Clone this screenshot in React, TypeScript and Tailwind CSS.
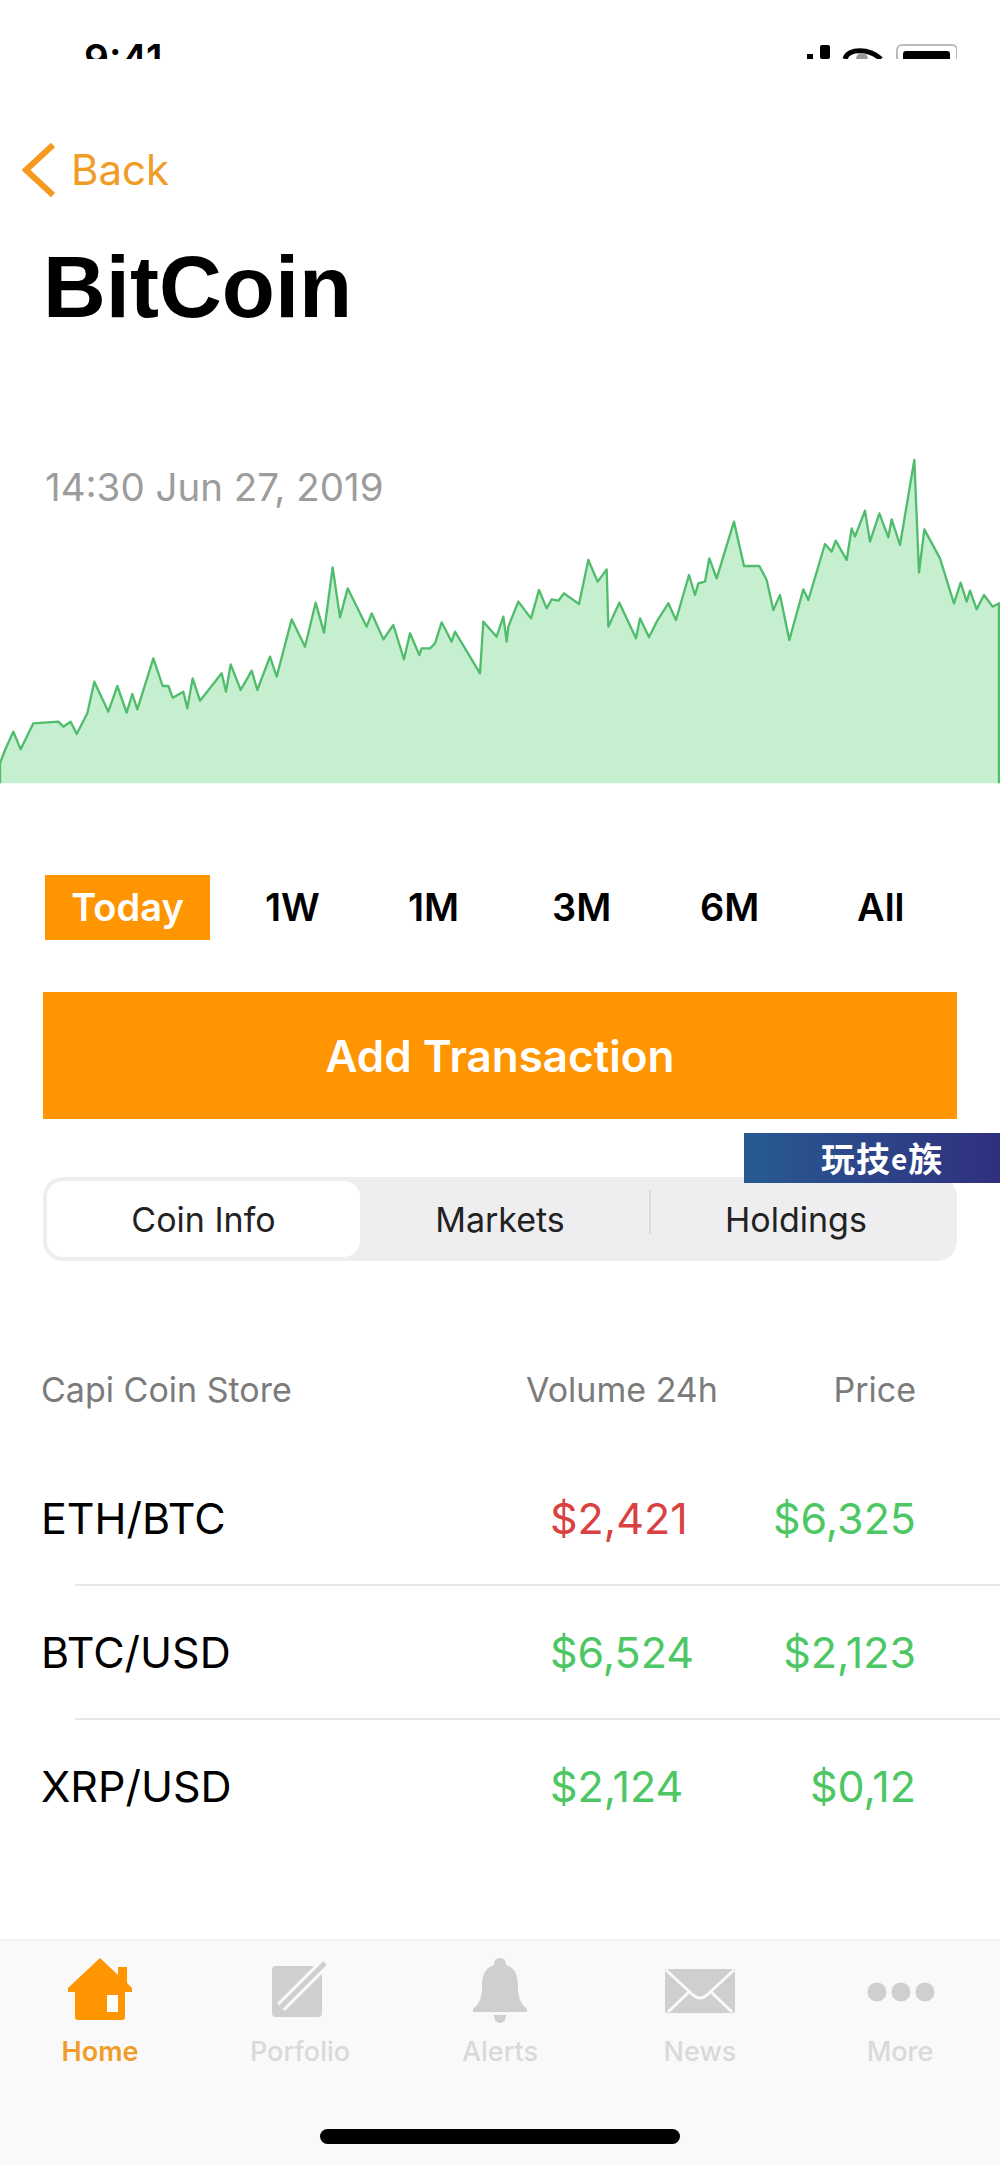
const FONT = "font-['Inter','Liberation_Sans',sans-serif]";

// chart trace, traced off the reference at 3x (x 0-3000, y 0-1110 over a 1000x370 box)
const TRACE = [
  [0, 1000], [15, 960], [40, 905], [62, 958], [100, 880], [175, 875], [190, 890], [212, 875], [230, 912], [262, 850],
  [283, 755], [325, 845], [352, 768], [380, 848], [397, 792], [412, 838], [460, 685], [488, 768], [505, 768], [518, 803],
  [550, 785], [562, 835], [578, 745], [600, 812], [665, 730], [678, 785], [692, 703], [722, 780], [755, 722], [772, 780],
  [810, 680], [830, 740], [875, 568], [915, 650], [947, 518], [972, 608], [998, 412], [1020, 562], [1043, 475], [1100, 590],
  [1115, 550], [1150, 628], [1180, 585], [1212, 688], [1230, 610], [1258, 675], [1265, 655], [1290, 655], [1305, 640], [1325, 577],
  [1355, 635], [1365, 605], [1440, 730], [1450, 575], [1490, 620], [1510, 560], [1520, 635], [1525, 590], [1555, 515], [1593, 565],
  [1617, 480], [1640, 535], [1655, 508], [1675, 512], [1692, 490], [1737, 522], [1765, 390], [1793, 455], [1820, 418], [1825, 590],
  [1858, 518], [1908, 625], [1920, 565], [1947, 622], [1970, 575], [2005, 520], [2028, 570], [2067, 435], [2085, 495], [2095, 460],
  [2115, 455], [2128, 385], [2150, 445], [2202, 275], [2232, 408], [2278, 408], [2300, 450], [2320, 540], [2340, 495], [2368, 630],
  [2410, 478], [2425, 510], [2475, 342], [2495, 365], [2507, 332], [2540, 390], [2555, 295], [2565, 320], [2595, 242], [2610, 335],
  [2638, 250], [2665, 322], [2675, 268], [2700, 345], [2743, 90], [2757, 428], [2773, 298], [2820, 385], [2840, 450], [2862, 520],
  [2882, 458], [2900, 515], [2910, 482], [2930, 538], [2952, 495], [2978, 530], [2997, 520],
];

const linePath = 'M0 1060 L' + TRACE.map(([x, y]) => `${x} ${y}`).join(' L') + ' L2997 1060';

const RANGES = [
  { label: '1W', width: 'w-[143px]' },
  { label: '1M', width: 'w-[144px]' },
  { label: '3M', width: 'w-[148px]' },
  { label: '6M', width: 'w-[157px]' },
  { label: 'All', width: 'w-auto' },
];

const ROWS = [
  { pair: 'ETH/BTC', volume: '$2,421', price: '$6,325', down: true },
  { pair: 'BTC/USD', volume: '$6,524', price: '$2,123', down: false },
  { pair: 'XRP/USD', volume: '$2,124', price: '$0,12', down: false },
];

function StatusIcons() {
  return (
    <svg width="150" height="15" viewBox="0 0 150 15" className="block">
      <rect x="0" y="10" width="6" height="5" fill="#000" />
      <rect x="13" y="1" width="10" height="14" rx="2" fill="#000" />
      <path d="M38 15 C41 4 62 4 74 15" fill="none" stroke="#000" strokeWidth="5" />
      <circle cx="55" cy="15" r="6" fill="#999" />
      <rect x="90" y="1" width="60" height="20" rx="5" fill="none" stroke="#bbb" strokeWidth="2" />
      <rect x="96" y="7" width="47" height="12" rx="3" fill="#000" />
    </svg>
  );
}

function HomeIcon() {
  return (
    <svg width="80" height="70" viewBox="0 0 80 70">
      <path d="M40 3 L58 20 V12 H67 V28 L72 33 V37 H65 V62 Q65 65 62 65 H18 Q15 65 15 62 V37 H8 V33 Z" fill="#ff9500" />
      <rect x="47" y="40" width="11" height="17" fill="#fff" />
    </svg>
  );
}

function PencilIcon() {
  return (
    <svg width="80" height="70" viewBox="0 0 80 70">
      <rect x="12" y="11" width="50" height="51" rx="4" fill="#cfcfcf" />
      <path d="M65 8 L21 52" stroke="#f9f9f9" strokeWidth="11" />
      <path d="M65 8 L26 47 L21 52" stroke="#cfcfcf" strokeWidth="5" />
    </svg>
  );
}

function BellIcon() {
  return (
    <svg width="80" height="70" viewBox="0 0 80 70">
      <path
        d="M40 3 C44 3 46 6 46 10 C56 13 58 22 58 32 C58 42 60 48 67 54 V57 H13 V54 C20 48 22 42 22 32 C22 22 24 13 34 10 C34 6 36 3 40 3 Z"
        fill="#cfcfcf"
      />
      <path d="M34 60 H46 C46 65 43 68 40 68 C37 68 34 65 34 60 Z" fill="#cfcfcf" />
    </svg>
  );
}

function MailIcon() {
  return (
    <svg width="80" height="70" viewBox="0 0 80 70">
      <rect x="5" y="14" width="70" height="44" rx="2" fill="#cfcfcf" />
      <path
        d="M6 15 L33 40 Q40 46 47 40 L74 15 M8 57 L30 36 M72 57 L50 36"
        fill="none"
        stroke="#f9f9f9"
        strokeWidth="3"
      />
    </svg>
  );
}

function DotsIcon() {
  return (
    <svg width="80" height="70" viewBox="0 0 80 70">
      <circle cx="17" cy="37" r="9.5" fill="#cfcfcf" />
      <circle cx="41" cy="37" r="9.5" fill="#cfcfcf" />
      <circle cx="65" cy="37" r="9.5" fill="#cfcfcf" />
    </svg>
  );
}

const TABS = [
  { label: 'Home', icon: <HomeIcon />, active: true },
  { label: 'Porfolio', icon: <PencilIcon />, active: false },
  { label: 'Alerts', icon: <BellIcon />, active: false },
  { label: 'News', icon: <MailIcon />, active: false },
  { label: 'More', icon: <DotsIcon />, active: false },
];

export default function App() {
  return (
    <div className={`relative w-[1000px] h-[2165px] overflow-hidden flex flex-col bg-white text-black ${FONT}`}>
      {/* Status bar, cut off in the source */}
      <div className="h-[59px] overflow-hidden flex justify-between pt-[44px] pl-[84px] pr-[43px]">
        <span className="text-[39px] leading-[29px] font-semibold">9:41</span>
        <StatusIcons />
      </div>

      {/* Back */}
      <div className="mt-[84px] ml-[22px] flex items-center gap-[14px] h-[54px] text-[#ef9d27]">
        <svg width="35" height="56" viewBox="0 0 35 56" fill="none">
          <path d="M31 3 L4 28 L31 53" stroke="#f7991c" strokeWidth="6" />
        </svg>
        <span className="text-[42px] leading-none">Back</span>
      </div>

      {/* Title */}
      <h1 className="mt-[45px] ml-[43px] text-[87px] leading-[90px] font-bold font-['Liberation_Sans',sans-serif]">
        BitCoin
      </h1>

      {/* Chart */}
      <div className="relative mt-[98px]">
        <svg width="1000" height="370" viewBox="0 0 3000 1110" className="block">
          <path d={linePath + ' Z'} fill="#c6efd0" />
          <path d={linePath} fill="none" stroke="#50bd6c" strokeWidth="7" strokeLinejoin="round" />
        </svg>
        <span className="absolute left-[45px] top-[37px] text-[38.5px] leading-[40px] text-[#9c9c9c]">
          14:30 Jun 27, 2019
        </span>
      </div>

      {/* Range picker */}
      <div className="mt-[75px] ml-[45px] flex items-center">
        <div className="w-[165px] h-[65px] flex items-center justify-center bg-[#ff9500] text-white text-[38px] font-semibold">
          Today
        </div>
        <div className="ml-[55px] flex text-[38px] font-semibold">
          {RANGES.map((r) => (
            <span key={r.label} className={r.width}>
              {r.label}
            </span>
          ))}
        </div>
      </div>

      {/* Add transaction */}
      <div className="mt-[52px] mx-[43px] h-[127px] flex items-center justify-center bg-[#ff9500] text-white text-[44px] font-semibold">
        Add Transaction
      </div>

      {/* Segmented control */}
      <div className="mt-[58px] ml-[43px] w-[914px] h-[84px] rounded-[20px] bg-[#eeeef0] p-[4px] flex items-center text-[34px] text-[#222]">
        <div className="w-[313px] h-full rounded-[16px] bg-white flex items-center justify-center">Coin Info</div>
        <div className="w-[289px] pr-[9px] text-center">Markets</div>
        <div className="relative flex-1 pr-[10px] text-center">
          <div className="absolute left-0 top-[-4px] w-[2px] h-[44px] bg-[#dcdcde]" />
          Holdings
        </div>
      </div>

      {/* Markets table */}
      <div className="mt-[107px]">
        <div className="h-[42px] pl-[41px] pr-[84px] flex items-center text-[34px] text-[#7b7b7b]">
          <span className="w-[485px]">Capi Coin Store</span>
          <span>Volume 24h</span>
          <span className="ml-auto">Price</span>
        </div>
        <div className="mt-[42px]">
          {ROWS.map((row, i) => (
            <div key={row.pair}>
              <div className="h-[132px] pl-[41px] pr-[84px] flex items-center text-[43px]">
                <span className="w-[509px]">{row.pair}</span>
                <span className={row.down ? 'text-[#d9403f]' : 'text-[#4cc764]'}>{row.volume}</span>
                <span className="ml-auto text-[#4cc764]">{row.price}</span>
              </div>
              {i < ROWS.length - 1 && <div className="ml-[75px] h-[2px] bg-[#e6e6e6]" />}
            </div>
          ))}
        </div>
      </div>

      {/* Tab bar */}
      <div className="mt-auto h-[226px] bg-[#f9f9f9] border-t-2 border-[#f1f1f1] flex flex-col items-center">
        <div className="w-full flex pt-[14px]">
          {TABS.map((tab) => (
            <div key={tab.label} className="w-[200px] flex flex-col items-center">
              {tab.icon}
              <span
                className={`mt-[12px] text-[27px] leading-[30px] ${
                  tab.active ? 'text-[#ef9d27] font-semibold' : 'text-[#d9d9d9] font-medium'
                }`}
              >
                {tab.label}
              </span>
            </div>
          ))}
        </div>
        <div className="mt-[62px] w-[360px] h-[15px] rounded-full bg-black" />
      </div>

      {/* Watermark stuck on the image */}
      <div className="absolute left-[744px] top-[1133px] w-[256px] h-[50px] bg-gradient-to-r from-[#265a92] to-[#2f2f7f] flex items-center pl-[77px] text-white text-[34px] tracking-[1px] leading-none font-bold font-['Noto_Sans_CJK_SC',sans-serif]">
        玩技<span className="text-[28px]">e</span>族
      </div>
    </div>
  );
}
